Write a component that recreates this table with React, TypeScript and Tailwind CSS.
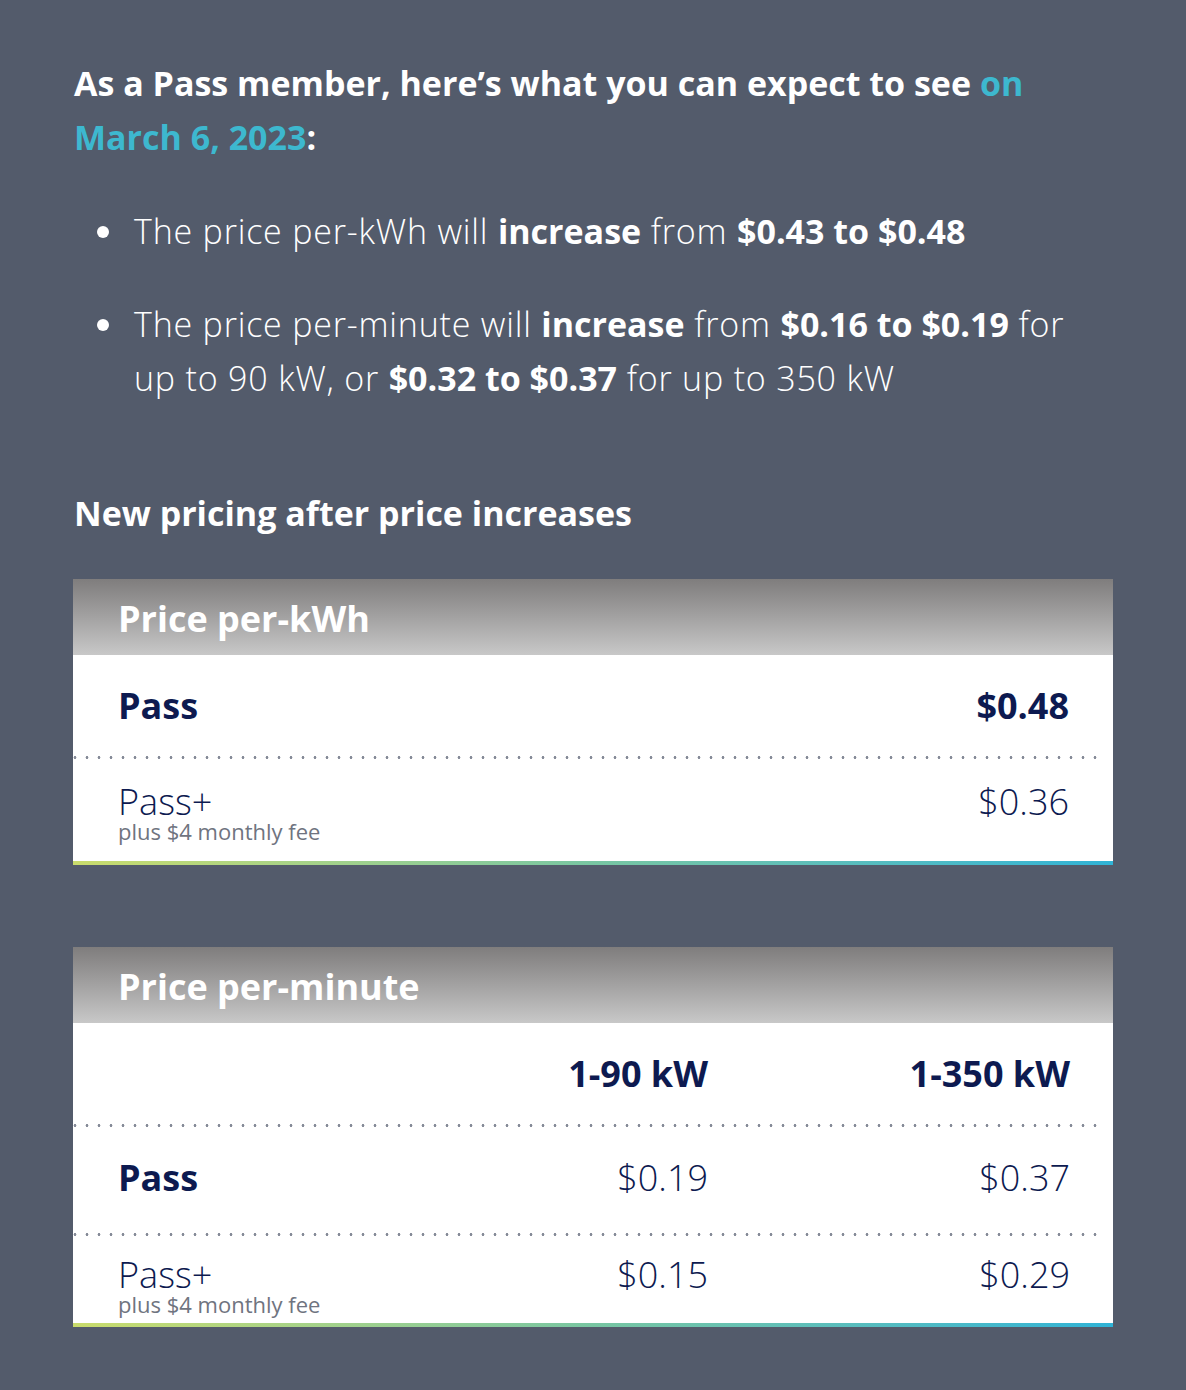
import React from "react";

const font = { fontFamily: '"Open Sans", "Noto Sans", sans-serif' };

function Dotted() {
  return (
    <div className="mr-4 h-[3px] bg-[radial-gradient(circle,#858a97_1.1px,transparent_1.7px)] bg-[length:12px_3px] bg-[position:-4px_0] bg-repeat-x" />
  );
}

function Header({ title }: { title: string }) {
  return (
    <div className="h-[76px] flex items-center pl-[45px] pt-[3px] bg-gradient-to-b from-[#7f7d7d] to-[#c8c8c8]">
      <span className="text-white font-bold text-[36px]">{title}</span>
    </div>
  );
}

function BottomBar() {
  return <div className="h-[4px] bg-gradient-to-r from-[#c9dc6c] via-[#78c6a2] to-[#2fb3d6]" />;
}

function PassPlus() {
  return (
    <div className="flex flex-col">
      <span className="text-[36px] font-light text-[#0d1a50] leading-[36px]">Pass+</span>
      <span className="text-[22px] text-[#6f7480] leading-[22px]">plus $4 monthly fee</span>
    </div>
  );
}

export default function App() {
  return (
    <div className="min-h-[1390px] w-[1186px] bg-[#535b6b] text-white" style={font}>
      <div className="pl-[74px] pr-[73px] pt-[56px]">
        <p className="text-[34px] font-bold leading-[54px]">
          As a Pass member, here’s what you can expect to see{" "}
          <span className="text-[#3db8cf]">on</span>
          <br />
          <span className="text-[#3db8cf]">March 6, 2023</span>:
        </p>
        <ul className="mt-[40px] flex flex-col gap-[40px] pl-[23px]">
          <li className="flex gap-[22px] text-[34px] font-light leading-[54px] tracking-[0.8px]">
            <span className="mt-[22px] h-[12px] w-[12px] shrink-0 rounded-full bg-white" />
            <span className="ml-[3px]">
              The price per-kWh will <b className="font-bold tracking-normal">increase</b> from{" "}
              <b className="font-bold tracking-normal">$0.43 to $0.48</b>
            </span>
          </li>
          <li className="-mt-[1px] flex gap-[22px] text-[34px] font-light leading-[54px] tracking-[0.8px]">
            <span className="mt-[22px] h-[12px] w-[12px] shrink-0 rounded-full bg-white" />
            <span className="ml-[3px]">
              The price per-minute will <b className="font-bold tracking-normal">increase</b> from{" "}
              <b className="font-bold tracking-normal">$0.16 to $0.19</b> for
              <br />
              up to 90 kW, or <b className="font-bold tracking-normal">$0.32 to $0.37</b> for up to 350 kW
            </span>
          </li>
        </ul>
        <h2 className="mt-[81px] text-[34px] font-bold leading-[54px]">
          New pricing after price increases
        </h2>
      </div>

      <div className="ml-[73px] mr-[73px] mt-[39px]">
        <div className="bg-white">
          <Header title="Price per-kWh" />
          <div className="h-[101px] flex items-center justify-between pl-[45px] pr-[44px] text-[#0d1a50]">
            <span className="text-[36px] font-bold">Pass</span>
            <span className="text-[36px] font-bold">$0.48</span>
          </div>
          <Dotted />
          <div className="h-[102px] flex items-start justify-between pl-[45px] pr-[44px] pt-[25px] text-[#0d1a50]">
            <PassPlus />
            <span className="text-[36px] font-light leading-[36px]">$0.36</span>
          </div>
          <BottomBar />
        </div>

        <div className="mt-[82px] bg-white">
          <Header title="Price per-minute" />
          <div className="h-[101px] grid grid-cols-[1fr_180px_362px] items-center pl-[45px] pr-[43px] text-[#0d1a50]">
            <span />
            <span className="text-right text-[36px] font-bold">1-90 kW</span>
            <span className="text-right text-[36px] font-bold">1-350 kW</span>
          </div>
          <Dotted />
          <div className="h-[106px] grid grid-cols-[1fr_180px_362px] items-center pl-[45px] pr-[43px] pb-[4px] text-[#0d1a50]">
            <span className="text-[36px] font-bold">Pass</span>
            <span className="text-right text-[36px] font-light">$0.19</span>
            <span className="text-right text-[36px] font-light">$0.37</span>
          </div>
          <Dotted />
          <div className="h-[87px] grid grid-cols-[1fr_180px_362px] items-start pl-[45px] pr-[43px] pt-[21px] text-[#0d1a50]">
            <PassPlus />
            <span className="text-right text-[36px] font-light leading-[36px]">$0.15</span>
            <span className="text-right text-[36px] font-light leading-[36px]">$0.29</span>
          </div>
          <BottomBar />
        </div>
      </div>
    </div>
  );
}
